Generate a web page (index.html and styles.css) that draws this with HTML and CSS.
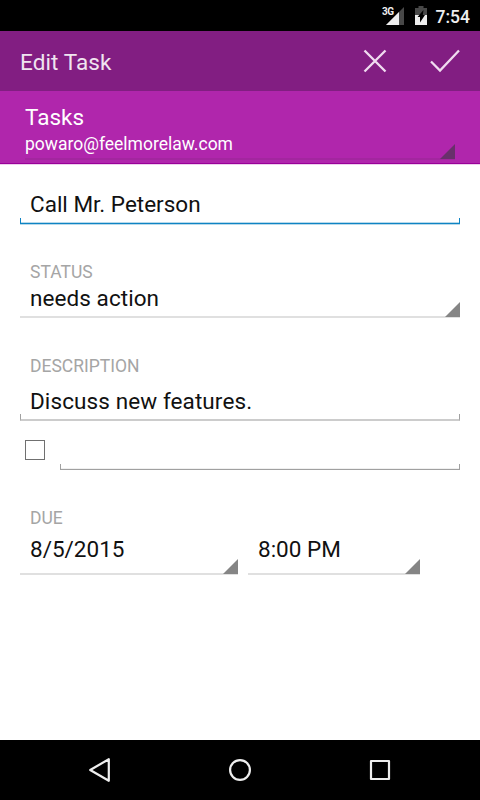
FILE: index.html
```html
<!DOCTYPE html>
<html lang="en">
<head>
<meta charset="utf-8">
<title>Edit Task</title>
<link rel="stylesheet" href="styles.css">
</head>
<body>
<div class="screen">
  <div class="status-bar">
    <span class="network">3G</span>
    <svg class="signal" width="18" height="18" viewBox="0 0 18 18"><path d="M18 0V18H0Z" fill="#484848"/><path d="M13 5V18H0Z" fill="#eee"/></svg>
    <svg class="battery" width="12" height="19" viewBox="0 0 12 19"><path d="M0 2H3.5V0H8.5V2H12V10H0Z" fill="#484848"/><path d="M0 9H12V19H0Z" fill="#eee"/><path d="M8.5 4L2.5 11H5V16.5L10 9H7.8Z" fill="#000"/></svg>
    <span class="clock">7:54</span>
  </div>
  <header class="app-bar">
    <h1 class="app-title">Edit Task</h1>
    <svg class="cancel" width="24" height="24" viewBox="0 0 24 24"><path d="M1.5 1.5L22.5 22.5M22.5 1.5L1.5 22.5"/></svg>
    <svg class="confirm" width="30" height="24" viewBox="0 0 30 24"><path d="M1 12.5L10 21.5L29 1.5"/></svg>
  </header>
  <section class="account">
    <div class="spinner account-spinner">
      <div class="list-name">Tasks</div>
      <div class="email">powaro@feelmorelaw.com</div>
    </div>
  </section>
  <main class="form">
    <div class="input title-input"><span>Call Mr. Peterson</span></div>
    <div class="label status-label"><span>STATUS</span></div>
    <div class="spinner status-spinner"><span>needs action</span></div>
    <div class="label description-label"><span>DESCRIPTION</span></div>
    <div class="input description-input"><span>Discuss new features.</span></div>
    <div class="check-row">
      <div class="checkbox"></div>
      <div class="input item-input"></div>
    </div>
    <div class="label due-label"><span>DUE</span></div>
    <div class="due-row">
      <div class="spinner date-spinner"><span>8/5/2015</span></div>
      <div class="spinner time-spinner"><span>8:00 PM</span></div>
    </div>
  </main>
  <nav class="nav-bar">
    <svg width="24" height="26" viewBox="0 0 24 26"><path d="M2.2 13L20.8 2.2V23.8Z"/></svg>
    <svg width="24" height="24" viewBox="0 0 24 24"><circle cx="12" cy="12" r="9.9"/></svg>
    <svg width="24" height="24" viewBox="0 0 24 24"><rect x="3" y="3" width="18" height="18"/></svg>
  </nav>
</div>
</body>
</html>
```
FILE: styles.css
```css
* {
  box-sizing: border-box;
}

body {
  margin: 0;
  font-family: Roboto, "Liberation Sans", sans-serif;
  color: #111;
  background: #fff;
}

.screen {
  width: 480px;
  height: 800px;
  display: flex;
  flex-direction: column;
  overflow: hidden;
}

.status-bar {
  flex: none;
  height: 31px;
  padding: 7px 10px 0 0;
  background: #000;
  color: #eee;
  display: flex;
  justify-content: flex-end;
  align-items: flex-start;
}

.network {
  font-size: 10px;
  line-height: 10px;
  font-weight: 700;
  letter-spacing: -0.5px;
  margin-right: -8px;
  z-index: 1;
}

.battery {
  margin: -1px 9px 0 11px;
}

.clock {
  font-size: 17.5px;
  line-height: 20px;
  font-weight: 500;
}

.app-bar {
  flex: none;
  height: 60px;
  padding: 0 20px;
  background: #821e82;
  display: flex;
  align-items: center;
}

.app-title {
  flex: 1;
  margin: 0;
  padding-top: 2px;
  font-size: 22.5px;
  line-height: 28px;
  font-weight: 400;
  letter-spacing: 0.1px;
  color: #f0e4f0;
}

.app-bar svg {
  fill: none;
  stroke: #f0dcf0;
  stroke-width: 2.3;
}

.cancel {
  margin-right: 43px;
}

.account {
  flex: none;
  height: 74px;
  padding: 0 25px;
  background: #b026ac;
  border-bottom: 1px solid #edcfed;
  box-shadow: inset 0 -1px #990099;
  color: #fff;
}

.spinner {
  position: relative;
  border-bottom: 2px solid #e0e0e0;
}

.spinner::after {
  content: "";
  position: absolute;
  right: 0;
  bottom: -1px;
  width: 15px;
  height: 15px;
  background: #858585;
  clip-path: polygon(100% 0, 100% 100%, 0 100%);
}

.account-spinner {
  height: 69px;
  padding-top: 12px;
  border-color: #a3269f;
}

.account-spinner::after {
  background: #69306b;
}

.list-name {
  font-size: 22.5px;
  line-height: 28px;
}

.email {
  font-size: 17.5px;
  line-height: 26px;
}

.form {
  flex: 1;
  padding: 14px 20px 0;
  font-size: 22.5px;
}

.input,
.form .spinner {
  line-height: 28px;
  padding-left: 10px;
  white-space: nowrap;
}

.input {
  position: relative;
}

.input::after {
  content: "";
  position: absolute;
  left: 0;
  right: 0;
  bottom: 0;
  height: 5px;
  border: solid #a0a0a0;
  border-width: 0 1px 1px;
}

.title-input {
  height: 46px;
  padding-top: 11px;
  border-bottom: 1px solid #b8d9ea;
}

.title-input::after {
  border-color: #0e84c4;
  box-shadow: inset 0 -1px #b8d9ea;
}

.label {
  padding-left: 10px;
  font-size: 17.5px;
  line-height: 22px;
  color: #a5a5a5;
}

.status-label {
  margin-top: 36px;
}

.status-spinner {
  height: 35px;
  padding-top: 1px;
  letter-spacing: 0.07px;
}

.description-label {
  margin-top: 37px;
}

.description-input {
  height: 44px;
  padding-top: 10px;
  letter-spacing: 0.1px;
}

.description-input::after {
  height: 5px;
  border-color: #a0a0a0 #a0a0a0 #ccc;
  border-width: 0 1px 2px;
}

.check-row {
  display: flex;
  height: 49px;
  padding-left: 5px;
}

.checkbox {
  width: 20px;
  height: 20px;
  margin: 19px 15px 0 0;
  border: 1px solid #707070;
}

.item-input {
  flex: 1;
}

.item-input::after {
  box-shadow: inset 0 -1px #f0f0f0;
}

.due-label {
  margin-top: 37px;
}

.due-row {
  display: flex;
  gap: 10px;
}

.date-spinner,
.time-spinner {
  height: 46px;
  padding-top: 6px;
}

.date-spinner {
  width: 218px;
}

.time-spinner {
  width: 172px;
}

.nav-bar {
  flex: none;
  height: 60px;
  background: #000;
  display: flex;
  justify-content: center;
  align-items: center;
  gap: 116px;
}

.nav-bar svg {
  fill: none;
  stroke: #eee;
  stroke-width: 2.2;
  stroke-linejoin: round;
}
```
